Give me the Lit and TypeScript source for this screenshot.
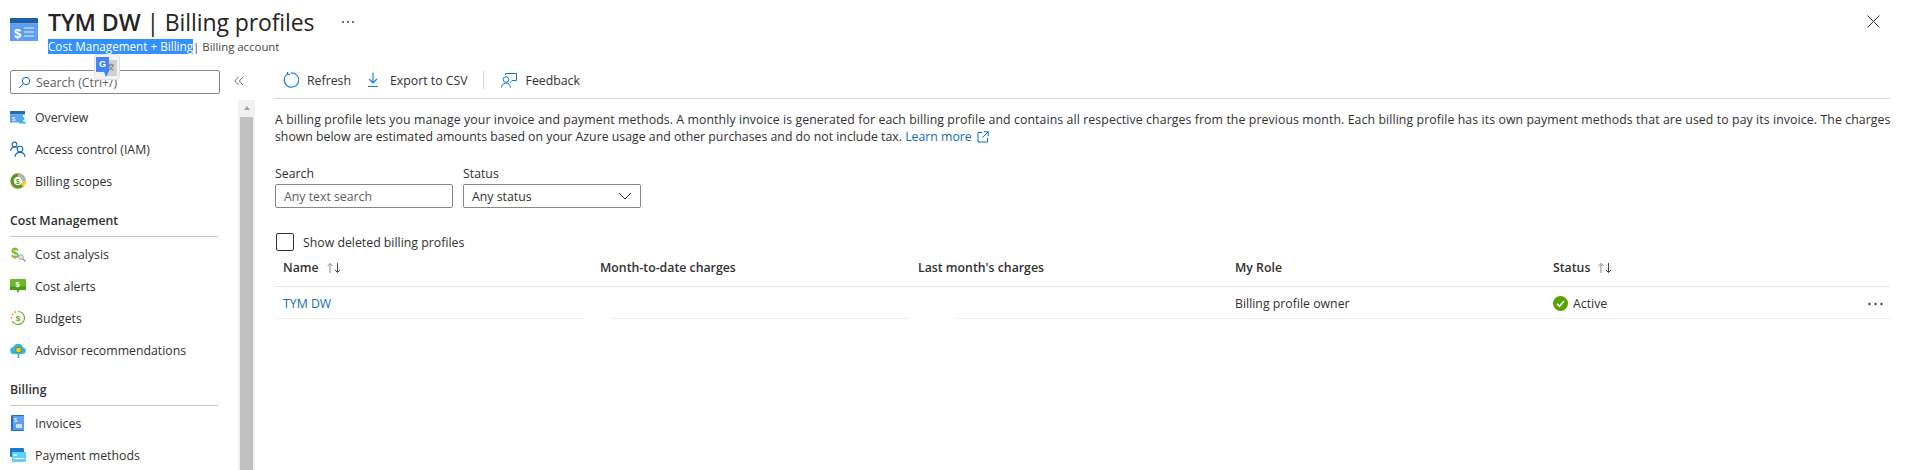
import { LitElement, html, css, svg } from "lit";
import { customElement } from "lit/decorators.js";

const icons: Record<string, any> = {
  overview: svg`<rect x="0" y="2" width="15" height="3.500" fill="#1f6fb5"/><rect x="0" y="5.500" width="13" height="8" fill="#5ea0ef"/><text x="2" y="12" font-size="6" fill="#fff" font-family="Liberation Sans">$</text><circle cx="12.500" cy="9.500" r="2" fill="#32bedd"/><path d="M9 14.500c0-3 7-3 7 0z" fill="#32bedd"/>`,
  iam: svg`<g fill="none" stroke="#0f6cbd" stroke-width="1.100"><circle cx="4.500" cy="3.500" r="2.400"/><path d="M.6 10c.3-3 1.800-4 3.900-4 1 0 1.700.2 2.300.6"/><circle cx="10" cy="8" r="2.800"/><path d="M5 16c.3-3.200 2.400-4.600 5-4.600s4.700 1.400 5 4.600"/></g>`,
  scopes: svg`<circle cx="8" cy="8" r="6" fill="none" stroke="#5e9624" stroke-width="3.400"/><path d="M8 2a6 6 0 0 1 6 6" fill="none" stroke="#b3b3b3" stroke-width="3.400"/><path d="M14 8a6 6 0 0 1-2 4.500" fill="none" stroke="#fcd116" stroke-width="3.400"/><text x="6" y="10.500" font-size="6.500" font-weight="700" fill="#5e9624" font-family="Liberation Sans">$</text>`,
  analysis: svg`<text x="1" y="12" font-size="14" font-weight="700" fill="#76b82a" font-family="Liberation Sans">$</text><circle cx="11" cy="11" r="2.400" fill="#e6e6e6" stroke="#a3a3a3"/><path d="M13 13l2.500 2.500" stroke="#8a8a8a" stroke-width="1.300"/>`,
  alerts: svg`<rect x="0" y="1" width="16" height="11" rx=".6" fill="#6cb82a"/><rect x="0" y="8.500" width="16" height="3.500" fill="#4a9a16"/><text x="5.500" y="8.500" font-size="7.500" font-weight="700" fill="#fff" font-family="Liberation Sans">$</text><path d="M6.500 12h3l-1.500 3z" fill="#4a9a16"/>`,
  budgets: svg`<path d="M8 1.500a6.500 6.500 0 1 1-5.800 9.500" fill="none" stroke="#68a51c" stroke-width="1.200"/><text x="5.700" y="11" font-size="8" font-weight="700" fill="#68a51c" font-family="Liberation Sans">$</text><g fill="#f7921e"><circle cx="1.500" cy="8" r="1"/><circle cx="2.500" cy="4.500" r="1"/><circle cx="5" cy="2" r="1"/></g>`,
  advisor: svg`<path d="M4 12a3.500 3.500 0 0 1-.5-7A5 5 0 0 1 13 5.500 3.300 3.300 0 0 1 13 12z" fill="#32b4dc"/><rect x="6" y="5.500" width="5" height="5" rx="1.200" fill="#fcd116" stroke="#7a5b00" stroke-width=".6"/><path d="M8.500 11v5" stroke="#32b4dc" stroke-width="1.800"/>`,
  invoices: svg`<rect x="1" y="0" width="13" height="16" rx="1" fill="#1d6fc9"/><rect x="3" y="1" width="11" height="14" fill="#5ea0ef"/><rect x="6" y="9" width="6" height="4" fill="#cfe3f8"/><text x="4" y="7" font-size="5.500" fill="#fff" font-family="Liberation Sans">$</text>`,
  payment: svg`<rect x="0" y="1" width="14" height="9" rx="1" fill="#1d78c9"/><rect x="2" y="5" width="14" height="10" rx="1" fill="#5fd0fb"/><rect x="3.500" y="7" width="3" height="2" fill="#fff"/><rect x="3.500" y="11" width="11" height="1" fill="#fff"/>`,
};

const sortIcon = html`<svg class="sort" viewBox="0 0 16 12" width="16" height="12"><path d="M4 11V1.500M1.500 4L4 1.500 6.500 4" fill="none" stroke="#8a8886" stroke-width="1"/><path d="M11.500 1v9.500M9 8l2.500 2.500L14 8" fill="none" stroke="#484644" stroke-width="1"/></svg>`;

@customElement("app-root")
export class AppRoot extends LitElement {
  static styles = css`
    :host { display: block; width: 1909px; height: 470px; overflow: hidden; background: #fff; color: #323130; font-family: "Open Sans", "Noto Sans", sans-serif; font-size: 12.3px; position: relative; }
    .header { height: 62px; display: flex; align-items: flex-start; box-sizing: border-box; padding: 8px 0 0 10px; }
    .logo { width: 28px; height: 23px; margin: 10px 10px 0 0; flex: none; }
    .titles { display: flex; flex-direction: column; }
    .title-row { display: flex; align-items: center; height: 28px; }
    h1 { margin: 0; font-size: 23px; font-weight: 400; line-height: 28px; color: #252423; white-space: nowrap; letter-spacing: -0.1px; }
    h1 b { font-weight: 600; font-size: 23.2px; }
    .more-top { margin-left: 27px; width: 14px; height: 4px; }
    .subtitle { display: flex; align-items: center; height: 16px; margin-top: 2px; font-size: 11.4px; line-height: 15px; color: #484644; white-space: nowrap; }
    .selected { background: #3390ff; color: #fff; font-size: 11.7px; }
    .close { margin: 7px 29px 0 auto; }
    .translate { position: absolute; left: 94px; top: 54px; width: 26px; height: 26px; box-sizing: border-box; background: #f3f3f3; border: 1px solid #e0e0e0; border-radius: 4px; display: flex; align-items: center; justify-content: center; }
    .body { display: flex; height: 408px; }
    .side { width: 256px; flex: none; display: flex; }
    .side-col { width: 240px; flex: none; box-sizing: border-box; padding: 8px 0 0 10px; }
    .search { width: 210px; height: 24px; box-sizing: border-box; border: 1px solid #8a8886; border-radius: 2px; display: flex; align-items: center; padding-left: 7px; gap: 5px; color: #605e5c; }
    .nav { margin-top: 7px; width: 208px; }
    .item { display: flex; align-items: center; height: 32px; gap: 9px; white-space: nowrap; }
    .item svg { width: 16px; height: 16px; flex: none; }
    .sec { font-weight: 600; height: 23px; display: flex; align-items: center; margin-top: 12px; border-bottom: 1px solid #c8c6c4; padding-bottom: 4px; margin-bottom: 1px; }
    .scroll { width: 17px; flex: none; background: #f1f1f1; margin-top: 38px; display: flex; flex-direction: column; align-items: center; margin-left: -2px; margin-right: 1px; }
    .scroll .arrow { width: 0; height: 0; border: 3.500px solid transparent; border-top: 0; border-bottom: 4px solid #a3a3a3; margin: 6px 0 7px; }
    .scroll .thumb { flex: 1; width: 13px; background: #c1c1c1; }
    .chev { position: absolute; left: 234px; top: 76px; }
    .main { flex: 1; padding: 0 19px; min-width: 0; }
    .toolbar { height: 37px; box-sizing: border-box; border-bottom: 1px solid #d6d6d6; display: flex; align-items: center; padding-left: 8px; }
    .tool { display: flex; align-items: center; gap: 8px; margin-right: 14px; white-space: nowrap; }
    .tool.w { gap: 9px; margin-right: 15px; }
    .tool svg { width: 16px; height: 16px; flex: none; }
    .vsep { width: 1px; height: 18px; background: #d6d6d6; margin-right: 17px; }
    .desc { margin: 12px 0 0; line-height: 17px; white-space: nowrap; color: #323130; }
    .wide { letter-spacing: 0.095px; }
    a { color: #0f6cbd; text-decoration: none; }
    .desc svg { margin-left: 5px; vertical-align: -2px; }
    .filters { display: flex; gap: 10px; margin-top: 21px; }
    .field { width: 178px; display: flex; flex-direction: column; gap: 2px; }
    .field label { line-height: 16px; }
    .box { height: 24px; box-sizing: border-box; border: 1px solid #8a8886; border-radius: 2px; padding: 0 8px; display: flex; align-items: center; justify-content: space-between; }
    .ph { color: #605e5c; }
    .check { display: flex; align-items: center; gap: 9px; margin: 24px 0 0 1px; height: 20px; }
    .cb { width: 18px; height: 18px; box-sizing: border-box; border: 1px solid #323130; border-radius: 2px; }
    .row { display: grid; grid-template-columns: 317px 318px 317px 318px 1fr 24px; align-items: center; padding-left: 8px; }
    .row.head { height: 35px; box-sizing: border-box; padding-bottom: 3px; border-bottom: 1px solid #e8e8e8; font-weight: 600; }
    .row.head > div { display: flex; align-items: center; gap: 7px; }
    .row.data { height: 31px; box-sizing: border-box; padding-top: 2px; }
    .rule { display: flex; height: 1px; }
    .rule i { display: block; background: #eeeeee; height: 1px; }
    .rule i.cut { background: #fff; }
    .rule i.rest { flex: 1; }
    .status { display: flex; align-items: center; gap: 5px; }
    .dots { width: 17px; height: 4px; justify-self: end; margin-right: 6px; }
  `;

  item(icon: string, label: string) {
    return html`<div class="item"><svg viewBox="0 0 16 16">${icons[icon]}</svg><span>${label}</span></div>`;
  }

  render() {
    return html`
      <div class="header">
        <svg class="logo" viewBox="0 0 28 23"><rect width="28" height="5.500" fill="#1f5fa8"/><rect y="5.500" width="28" height="17.500" fill="#5ea0ef"/><text x="4" y="19.500" font-size="13" font-weight="700" fill="#fff" font-family="Liberation Sans">$</text><path d="M14 10h10M14 14h10M14 18h10" stroke="#b9d6f7" stroke-width="1.600"/></svg>
        <div class="titles">
          <div class="title-row"><h1><b>TYM DW</b> | Billing profiles</h1>
            <svg class="more-top" viewBox="0 0 14 4"><g fill="#484644"><circle cx="2" cy="2" r="1"/><circle cx="7" cy="2" r="1"/><circle cx="12" cy="2" r="1"/></g></svg></div>
          <div class="subtitle"><span class="selected">Cost Management + Billing</span><span>| Billing account</span></div>
        </div>
        <svg class="close" width="13" height="13" viewBox="0 0 13 13"><path d="M.5.500l12 12M12.500.500l-12 12" stroke="#323130" stroke-width="1"/></svg>
      </div>
      <div class="body">
        <div class="side">
          <div class="side-col">
            <div class="search"><svg width="13" height="13" viewBox="0 0 13 13"><circle cx="8" cy="5" r="3.700" fill="none" stroke="#0f6cbd"/><path d="M5.300 7.700L1 12" stroke="#0f6cbd"/></svg><span>Search (Ctrl+/)</span></div>
            <div class="nav">
              ${this.item("overview", "Overview")}
              ${this.item("iam", "Access control (IAM)")}
              ${this.item("scopes", "Billing scopes")}
              <div class="sec">Cost Management</div>
              ${this.item("analysis", "Cost analysis")}
              ${this.item("alerts", "Cost alerts")}
              ${this.item("budgets", "Budgets")}
              ${this.item("advisor", "Advisor recommendations")}
              <div class="sec">Billing</div>
              ${this.item("invoices", "Invoices")}
              ${this.item("payment", "Payment methods")}
            </div>
          </div>
          <div class="scroll"><div class="arrow"></div><div class="thumb"></div></div>
        </div>
        <div class="main">
          <div class="toolbar">
            <div class="tool"><svg viewBox="0 0 16 16"><path d="M4.600 1.900A7.200 7.200 0 1 0 8 .8M4.600 1.900V-.2M4.600 1.900l2.400.8" fill="none" stroke="#0f78d4" stroke-width="1.100"/></svg>Refresh</div>
            <div class="tool w"><svg viewBox="0 0 16 16"><path d="M8 .5v10.500M4 7l4 4 4-4M3 14.500h10" fill="none" stroke="#0f78d4" stroke-width="1.100"/></svg>Export to CSV</div>
            <div class="vsep"></div>
            <div class="tool w"><svg viewBox="0 0 16 16"><g fill="none" stroke="#0f78d4" stroke-width="1"><circle cx="5" cy="7.500" r="2.800"/><path d="M.5 15.500c.3-3 2-4.300 4.500-4.300s4.200 1.300 4.500 4.300"/><path d="M4.500 3V1.500h11v7h-4.500l-2 2"/></g></svg>Feedback</div>
          </div>
          <p class="desc"><span class="wide">A billing profile lets you manage your invoice and payment methods. A monthly invoice is generated for each billing profile and contains all respective charges from the previous month. Each billing profile has its own payment methods that are used to pay its invoice. The charges</span><br>shown below are estimated amounts based on your Azure usage and other purchases and do not include tax. <a href="#">Learn more</a><svg width="12" height="12" viewBox="0 0 12 12"><path d="M5 1.500H1v9.500h9.500V7M7 .8h4.200V5M11 1L5.500 6.500" fill="none" stroke="#0f6cbd"/></svg></p>
          <div class="filters">
            <div class="field"><label>Search</label><div class="box"><span class="ph">Any text search</span></div></div>
            <div class="field"><label>Status</label><div class="box"><span>Any status</span><svg width="14" height="8" viewBox="0 0 14 8"><path d="M1 1l6 6 6-6" fill="none" stroke="#323130"/></svg></div></div>
          </div>
          <div class="check"><div class="cb"></div><span>Show deleted billing profiles</span></div>
          <div class="table">
            <div class="row head"><div>Name ${sortIcon}</div><div>Month-to-date charges</div><div>Last month's charges</div><div>My Role</div><div>Status ${sortIcon}</div><div></div></div>
            <div class="row data"><div><a href="#">TYM DW</a></div><div></div><div></div><div>Billing profile owner</div>
              <div class="status"><svg width="15" height="15" viewBox="0 0 14 14"><circle cx="7" cy="7" r="7" fill="#57a300"/><path d="M3.800 7.200l2.200 2.400 4.200-5" fill="none" stroke="#fff" stroke-width="1.500"/></svg>Active</div>
              <svg class="dots" viewBox="0 0 16 4"><g fill="#484644"><circle cx="2" cy="2" r="1.200"/><circle cx="8" cy="2" r="1.200"/><circle cx="14" cy="2" r="1.200"/></g></svg></div>
            <div class="rule"><i style="width:309px"></i><i class="cut" style="width:26px"></i><i style="width:300px"></i><i class="cut" style="width:46px"></i><i class="rest"></i></div>
          </div>
        </div>
      </div>
      <div class="translate"><svg width="22" height="24" viewBox="0 0 22 24"><rect x="9" y="5" width="12" height="16" fill="#d0d0d0"/><path d="M12 10h6M15 8.500v1.500M13 10c.5 2.500 2.500 4.500 4.500 5M17 10c-.5 2.500-2.500 4.500-4.500 5" stroke="#666" stroke-width=".8" fill="none"/><path d="M0 2h13v14l-3 6-2-5H0z" fill="#4285f4"/><text x="3" y="12" font-size="9" font-weight="700" fill="#fff" font-family="Liberation Sans">G</text></svg></div>
      <svg class="chev" width="10" height="10" viewBox="0 0 10 10"><path d="M4.500 1L.8 5l3.700 4M9 1L5.300 5 9 9" fill="none" stroke="#605e5c" stroke-width=".9"/></svg>
    `;
  }
}
